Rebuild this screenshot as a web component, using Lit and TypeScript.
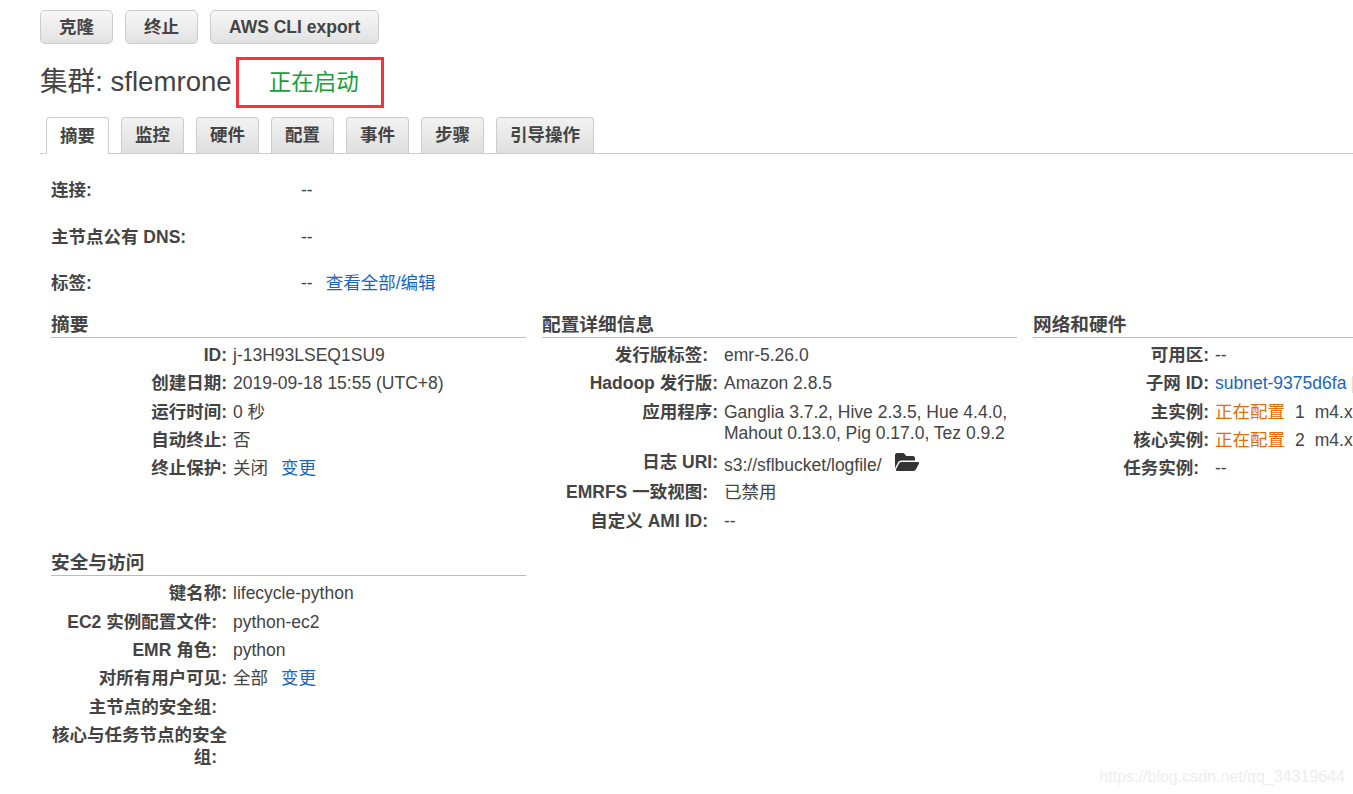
import { LitElement, html, css } from "lit";
import { customElement } from "lit/decorators.js";

const folder = html`<svg class="folder" viewBox="0 64 576 384" preserveAspectRatio="none" aria-hidden="true"><path fill="currentColor" d="M572.694 292.093L500.27 416.248A63.997 63.997 0 0 1 444.989 448H45.025c-18.523 0-30.064-20.093-20.731-36.093l72.424-124.155A64 64 0 0 1 152 256h399.964c18.523 0 30.064 20.093 20.73 36.093zM152 224h328v-48c0-26.51-21.49-48-48-48H272l-64-64H48C21.49 64 0 85.49 0 112v278.046l69.077-118.418C86.214 242.25 117.989 224 152 224z"/></svg>`;

@customElement("app-root")
export class AppRoot extends LitElement {
  static styles = css`
    :host {
      display: block;
      height: 794px;
      overflow: hidden;
      position: relative;
      background: #fff;
      color: #444;
      font: 17.5px/21.6px "Liberation Sans", "Noto Sans CJK SC", sans-serif;
    }
    .page { padding: 10px 0 0 40px; }
    .buttons { display: flex; gap: 12px; }
    .btn {
      height: 34px;
      box-sizing: border-box;
      padding: 1px 18px 0;
      display: flex;
      align-items: center;
      border: 1px solid #ccc;
      border-radius: 5px;
      background: linear-gradient(#f7f7f7, #e2e2e2);
      font-weight: 700;
      white-space: nowrap;
    }
    .title-row { display: flex; align-items: center; margin-top: 13px; height: 51px; }
    h1 { margin: 0 0 2px; font-size: 27.6px; line-height: 34px; font-weight: 400; white-space: nowrap; }
    .status {
      box-sizing: border-box;
      width: 148px;
      height: 51px;
      margin-left: 4px;
      padding: 1px 0 0 30px;
      display: flex;
      align-items: center;
      border: 3px solid #f4333a;
      font-size: 22.5px;
      color: #17a03a;
    }
    .tabs {
      display: flex;
      gap: 12px;
      margin-top: 9px;
      padding-left: 6px;
      height: 37px;
      box-sizing: border-box;
      border-bottom: 1px solid #ccc;
    }
    .tab {
      height: 36px;
      box-sizing: border-box;
      padding: 1px 13px 0;
      display: flex;
      align-items: center;
      border: 1px solid #ccc;
      border-bottom: none;
      border-radius: 4px 4px 0 0;
      background: linear-gradient(#f2f2f2, #dfdfdf);
      font-weight: 700;
      white-space: nowrap;
    }
    .tab.active { background: #fff; height: 37px; margin-bottom: -1px; }
    .content { padding: 26px 0 0 11px; }
    .top-row { display: grid; grid-template-columns: 250px auto; justify-content: start; height: 46.5px; align-items: start; }
    .top-row .lbl { text-align: left; }
    .link { color: #1a66c0; }
    .lbl { font-weight: 700; text-align: right; }
    .lbl.pad .colon { padding-right: 10px; }
    .gap-link { margin-left: 13px; }
    .columns { display: grid; grid-template-columns: repeat(3, 475px); column-gap: 16px; margin-top: -6.5px; }
    h2 {
      margin: 0 0 3.5px;
      height: 25px;
      box-sizing: border-box;
      border-bottom: 1px solid #bbb;
      font-size: 18.7px;
      line-height: 24px;
      font-weight: 700;
      white-space: nowrap;
    }
    .later { margin-top: 68px; }
    .row {
      display: grid;
      grid-template-columns: 176px 1fr;
      column-gap: 6px;
      padding: 3.4px 0;
    }
    .val { white-space: nowrap; }
    .val.wrap { white-space: normal; }
    .orange { color: #e26f00; }
    .num { margin-left: 10px; }
    .type { margin-left: 10px; }
    .folder { width: 24px; height: 18px; margin: 1.5px 0 0 9px; vertical-align: -1px; color: #333; }
    .mark {
      position: absolute;
      right: 8px;
      top: 766px;
      font-size: 16px;
      color: #eeeeee;
      white-space: nowrap;
    }
  `;

  private row(label: string, value: unknown, pad = false, wrap = false) {
    return html`<div class="row">
      <div class="lbl ${pad ? "pad" : ""}">${label}<span class="colon">:</span></div>
      <div class="val ${wrap ? "wrap" : ""}">${value}</div>
    </div>`;
  }

  render() {
    return html`
      <div class="page">
        <div class="buttons">
          <div class="btn">克隆</div>
          <div class="btn">终止</div>
          <div class="btn">AWS CLI export</div>
        </div>
        <div class="title-row">
          <h1>集群: sflemrone</h1>
          <div class="status">正在启动</div>
        </div>
        <div class="tabs">
          <div class="tab active">摘要</div>
          <div class="tab">监控</div>
          <div class="tab">硬件</div>
          <div class="tab">配置</div>
          <div class="tab">事件</div>
          <div class="tab">步骤</div>
          <div class="tab">引导操作</div>
        </div>
        <div class="content">
          <div class="top-row"><div class="lbl">连接:</div><div>--</div></div>
          <div class="top-row"><div class="lbl">主节点公有 DNS:</div><div>--</div></div>
          <div class="top-row"><div class="lbl">标签:</div><div>--<span class="link gap-link">查看全部/编辑</span></div></div>
          <div class="columns">
            <div>
              <section>
                <h2>摘要</h2>
                ${this.row("ID", "j-13H93LSEQ1SU9")}
                ${this.row("创建日期", "2019-09-18 15:55 (UTC+8)")}
                ${this.row("运行时间", "0 秒")}
                ${this.row("自动终止", "否")}
                ${this.row("终止保护", html`关闭<span class="link gap-link">变更</span>`)}
              </section>
              <section class="later">
                <h2>安全与访问</h2>
                ${this.row("键名称", "lifecycle-python")}
                ${this.row("EC2 实例配置文件", "python-ec2", true)}
                ${this.row("EMR 角色", "python", true)}
                ${this.row("对所有用户可见", html`全部<span class="link gap-link">变更</span>`)}
                ${this.row("主节点的安全组", "", true)}
                ${this.row("核心与任务节点的安全组", "", true)}
              </section>
            </div>
            <section>
              <h2>配置详细信息</h2>
              ${this.row("发行版标签", "emr-5.26.0", true)}
              ${this.row("Hadoop 发行版", "Amazon 2.8.5")}
              ${this.row("应用程序", "Ganglia 3.7.2, Hive 2.3.5, Hue 4.4.0, Mahout 0.13.0, Pig 0.17.0, Tez 0.9.2", false, true)}
              ${this.row("日志 URI", html`s3://sflbucket/logfile/ ${folder}`)}
              ${this.row("EMRFS 一致视图", "已禁用", true)}
              ${this.row("自定义 AMI ID", "--", true)}
            </section>
            <section>
              <h2>网络和硬件</h2>
              ${this.row("可用区", "--")}
              ${this.row("子网 ID", html`<span class="link">subnet-9375d6fa |</span>`)}
              ${this.row("主实例", html`<span class="orange">正在配置</span><span class="num">1</span><span class="type">m4.xlarge</span>`)}
              ${this.row("核心实例", html`<span class="orange">正在配置</span><span class="num">2</span><span class="type">m4.xlarge</span>`)}
              ${this.row("任务实例", "--", true)}
            </section>
          </div>
        </div>
      </div>
      <div class="mark">https://blog.csdn.net/qq_34319644</div>
    `;
  }
}
